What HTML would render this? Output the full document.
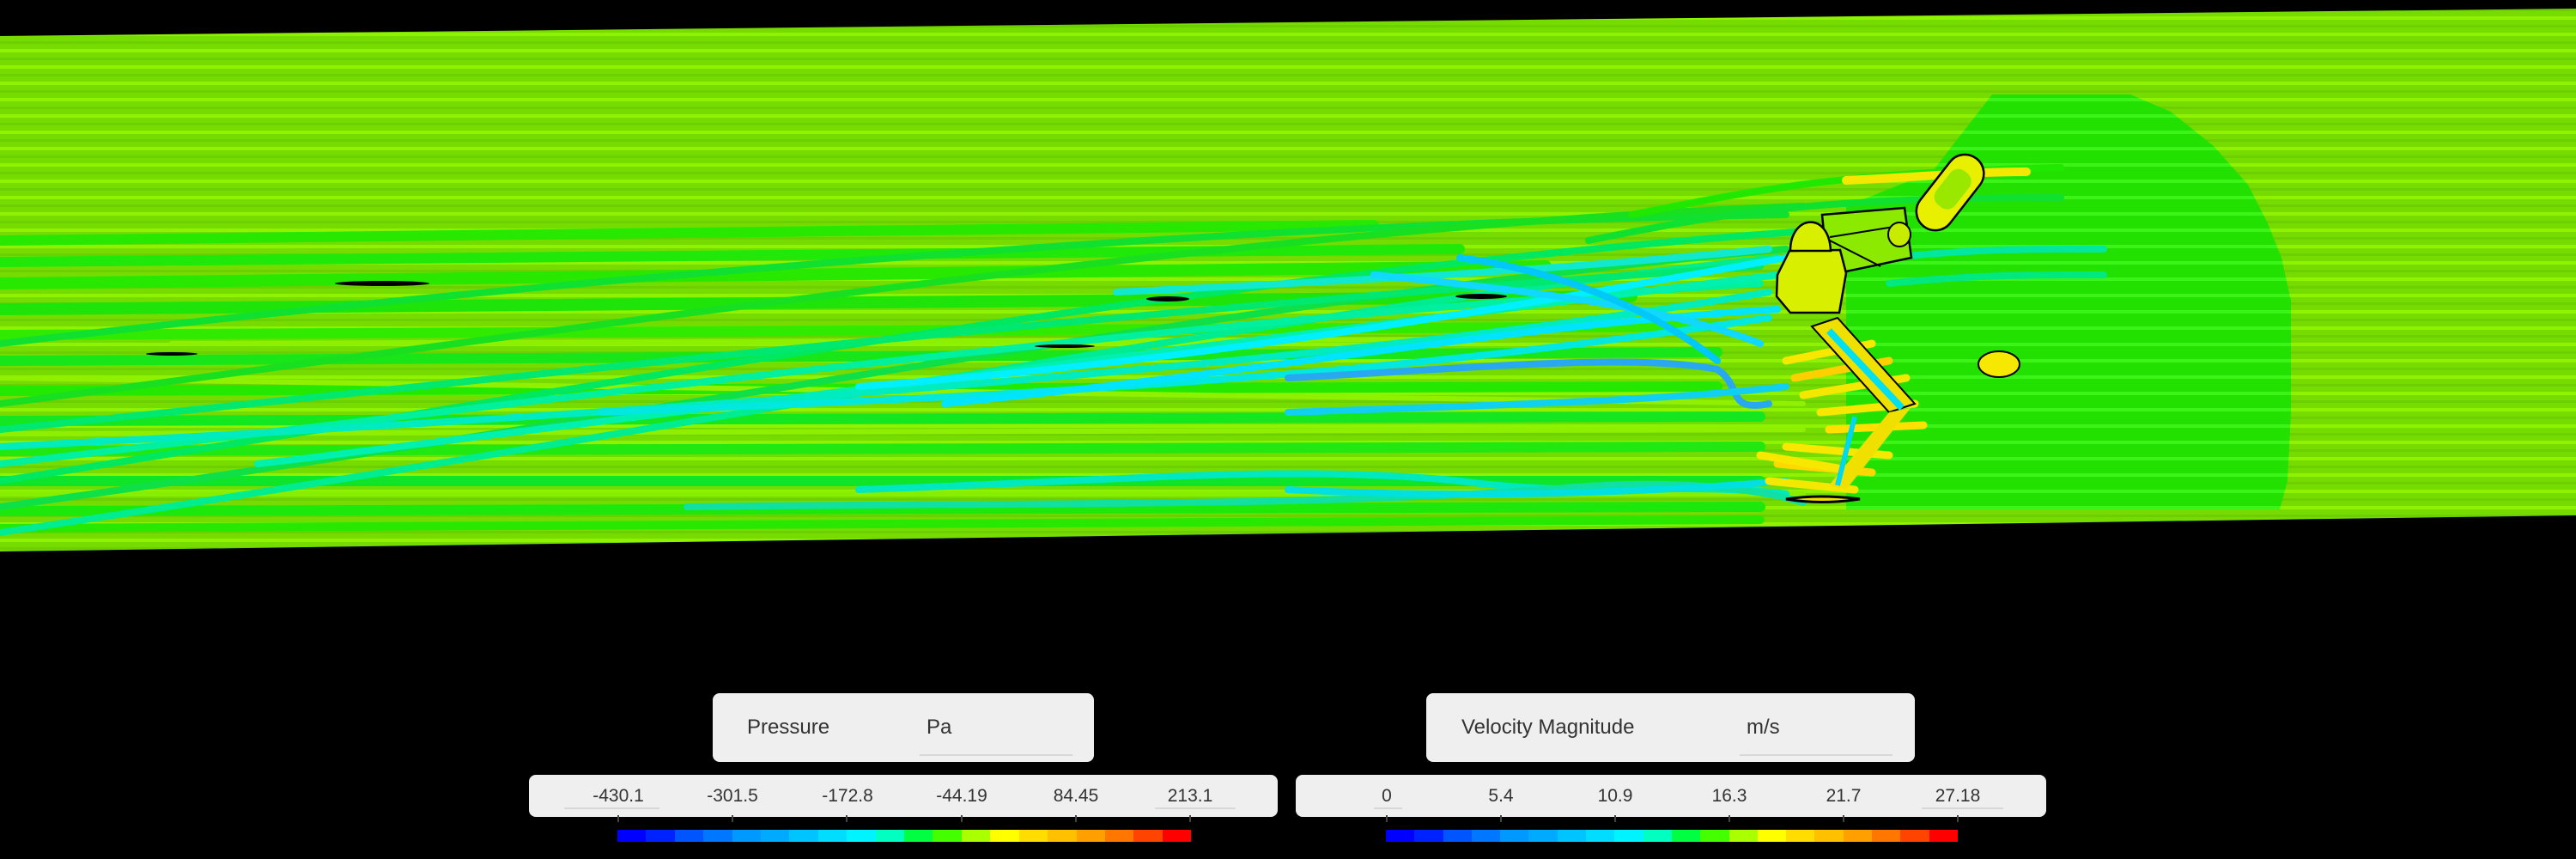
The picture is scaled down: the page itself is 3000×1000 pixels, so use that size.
<!DOCTYPE html>
<html><head><meta charset="utf-8"><style>
html,body{margin:0;padding:0;background:#000;width:3000px;height:1000px;overflow:hidden;font-family:"Liberation Sans",sans-serif;}
.box{position:absolute;background:#efefef;border-radius:8px;color:#333;}
.t{position:absolute;font-size:24px;top:26px;}
.ul{position:absolute;height:2px;background:#d8d8d8;}
.v{position:absolute;font-size:21px;top:13px;transform:translateX(-50%);white-space:nowrap;}
.tick{position:absolute;width:2px;height:8px;background:#444;top:949px;}
.bar{position:absolute;top:966px;height:14px;display:flex;}
.bar div{flex:1;}
</style></head><body>
<svg width="3000" height="1000" style="position:absolute;left:0;top:0">
<defs>
<clipPath id="c"><polygon points="0,42 3000,10 3000,600 0,642"/></clipPath>
<pattern id="p" width="40" height="19" patternUnits="userSpaceOnUse">
<rect width="40" height="19" fill="#76dc00"/><rect y="0" width="40" height="4" fill="#8ef200"/><rect y="10" width="40" height="3" fill="#6cd000"/>
</pattern>
<pattern id="w" width="40" height="19" patternUnits="userSpaceOnUse">
<rect width="40" height="19" fill="#22e000"/><rect y="0" width="40" height="4" fill="#3cf418"/>
</pattern>
</defs>
<g clip-path="url(#c)">
<rect width="3000" height="700" fill="url(#p)"/>
<path d="M2320,110 L2481,110 L2528,130 L2578,170 L2618,215 L2641,260 L2657,300 L2668,350 L2668,480 L2664,560 L2655,593 L2150,593 L2150,240 L2250,200 Z" fill="url(#w)"/>
<g fill="none" stroke-width="8" stroke-linecap="round">
<path d="M0,280 L1600,262" stroke="#28e800" stroke-width="12"/>
<path d="M0,305 L1700,290" stroke="#20e808" stroke-width="12"/>
<path d="M0,330 L1800,310" stroke="#28e800" stroke-width="14"/>
<path d="M0,360 L1900,345" stroke="#1ee40a" stroke-width="14"/>
<path d="M0,390 L2000,380" stroke="#30ea00" stroke-width="12"/>
<path d="M0,420 L2000,410" stroke="#18e618" stroke-width="12"/>
<path d="M0,455 L2000,450" stroke="#24e800" stroke-width="12"/>
<path d="M0,490 L2050,485" stroke="#14e620" stroke-width="12"/>
<path d="M0,525 L2050,520" stroke="#20e810" stroke-width="12"/>
<path d="M0,560 L2050,560" stroke="#10e428" stroke-width="12"/>
<path d="M0,595 L2050,590" stroke="#1ce80c" stroke-width="12"/>
<path d="M0,615 L2050,605" stroke="#28e800" stroke-width="10"/>
<path d="M0,440 L2100,470" stroke="#90f000" stroke-width="6"/>
<path d="M0,505 L2100,500" stroke="#8ef000" stroke-width="6"/>
<path d="M0,575 L2100,575" stroke="#88ee00" stroke-width="6"/>
<path d="M200,400 L1700,395" stroke="#8cf000" stroke-width="6"/>
<path d="M0,400 C600,330 1400,260 2080,250" stroke="#10e030"/>
<path d="M0,470 C700,380 1500,260 2100,240" stroke="#18e020"/>
<path d="M0,560 C700,450 1400,320 2090,270" stroke="#00e860"/>
<path d="M0,620 C800,500 1500,360 2070,300" stroke="#00ec90"/>
<path d="M0,590 C800,480 1500,340 2080,290" stroke="#10e048"/>
<path d="M0,540 C600,470 1400,370 2050,330" stroke="#00f0a0"/>
<path d="M0,500 C500,450 1300,360 2050,310" stroke="#00e870"/>
<path d="M300,540 C900,470 1500,390 2070,320" stroke="#00f0b0"/>
<path d="M0,520 C800,480 1600,420 2060,340" stroke="#00ecc0"/>
<path d="M700,480 C1200,460 1600,440 2060,370" stroke="#00e8e0"/>
<path d="M1000,450 C1400,420 1750,360 2080,300" stroke="#00f0ff"/>
<path d="M1100,470 C1500,430 1750,380 2070,360" stroke="#00e4ff"/>
<path d="M1300,340 C1500,330 1750,320 2060,290" stroke="#10e8d0"/>
<path d="M1600,320 C1800,340 1950,360 2050,400" stroke="#10d8ff"/>
<path d="M1700,300 C1850,320 1950,380 2000,420" stroke="#00c8f8"/>
<path d="M1500,440 C1700,430 1900,410 2000,430 C2030,450 2010,480 2060,470" stroke="#28a8f0"/>
<path d="M1500,480 C1800,470 1950,465 2080,450" stroke="#10d0f0"/>
<path d="M1000,570 C1300,560 1500,540 1700,560 C1850,580 1950,560 2080,575" stroke="#00e8c0"/>
<path d="M800,590 C1200,585 1500,590 1800,570 C1950,555 2050,570 2100,585" stroke="#10e0a0"/>
<path d="M1500,570 C1700,580 1900,575 2080,560" stroke="#00e0e0"/>
<path d="M1900,250 C2050,220 2150,200 2400,195" stroke="#20e800"/>
<path d="M1850,280 C2000,250 2100,230 2400,230" stroke="#10e030"/>
<path d="M2200,300 C2300,290 2350,290 2450,290" stroke="#00e8a0"/>
<path d="M2200,330 C2300,320 2350,320 2450,320" stroke="#00e880"/>
<path d="M2150,210 C2250,205 2300,200 2360,200" stroke="#f4e800" stroke-width="10"/>
</g>
<g stroke-width="9" stroke-linecap="round" fill="none">
<path d="M2080,420 L2180,400" stroke="#f8e800"/>
<path d="M2090,440 L2200,420" stroke="#ffd000"/>
<path d="M2100,460 L2220,440" stroke="#f4e800"/>
<path d="M2120,480 L2230,470" stroke="#f8e800"/>
<path d="M2130,500 L2240,495" stroke="#ffe000"/>
<path d="M2080,520 L2200,530" stroke="#f8e800"/>
<path d="M2070,540 L2180,550" stroke="#ffd800"/>
<path d="M2060,560 L2160,570" stroke="#f4e800"/>
<path d="M2050,530 L2140,545" stroke="#f8e800"/>
</g>
<path d="M2110,380 L2140,370 L2230,470 L2200,480 Z" fill="#f0e000" stroke="#000" stroke-width="2"/>
<path d="M2130,385 L2215,475" stroke="#00e0f0" stroke-width="8"/>
<path d="M2200,480 L2225,475 L2150,570 L2130,565 Z" fill="#f0e000"/>
<path d="M2160,485 L2140,565" stroke="#00d8f0" stroke-width="6"/>
<path d="M2080,581 Q2120,575 2166,581 Q2120,588 2080,581Z" fill="#f0e000" stroke="#000" stroke-width="3"/>
<path d="M2122,250 L2218,242 L2226,300 L2150,316 L2128,310 Z" fill="#8cea00" stroke="#000" stroke-width="2.5"/>
<path d="M2131,276 L2218,262 M2131,280 L2190,310" stroke="#000" stroke-width="2"/>
<path d="M2084,292 L2143,291 L2150,318 L2142,364 L2085,364 L2069,345 L2070,320 Z" fill="#d8f000" stroke="#000" stroke-width="2.5"/>
<path d="M2085,292 C2085,250 2130,245 2132,292 Z" fill="#d8f000" stroke="#000" stroke-width="2.5"/>
<ellipse cx="2212" cy="273" rx="13" ry="14" fill="#c8ec00" stroke="#000" stroke-width="2"/>
<g transform="translate(2268,228) rotate(38)">
<rect x="-22" y="-55" width="44" height="100" rx="22" fill="#e8f000" stroke="#000" stroke-width="2.5"/>
<rect x="-14" y="-35" width="28" height="50" rx="12" fill="#9ae800"/>
</g>
<ellipse cx="2328" cy="424" rx="24" ry="15" fill="#f6e800" stroke="#000" stroke-width="2"/>
<g fill="#000">
<ellipse cx="445" cy="330" rx="55" ry="3"/><ellipse cx="1360" cy="348" rx="25" ry="3"/><ellipse cx="1725" cy="345" rx="30" ry="3"/>
<ellipse cx="1240" cy="403" rx="35" ry="2"/><ellipse cx="200" cy="412" rx="30" ry="2"/>
</g>
</g>
</svg>

<div class="box" style="left:830px;top:807px;width:444px;height:80px">
<span class="t" style="left:40px">Pressure</span><span class="t" style="left:249px">Pa</span>
<div class="ul" style="left:241px;width:178px;top:71px"></div></div>
<div class="box" style="left:616px;top:902px;width:872px;height:49px">
<span class="v" style="left:104px">-430.1</span><span class="v" style="left:237px">-301.5</span><span class="v" style="left:371px">-172.8</span><span class="v" style="left:504px">-44.19</span><span class="v" style="left:637px">84.45</span><span class="v" style="left:770px">213.1</span>
<div class="ul" style="left:41px;width:111px;top:38px"></div><div class="ul" style="left:729px;width:94px;top:38px"></div></div>
<div class="tick" style="left:719px"></div><div class="tick" style="left:852px"></div><div class="tick" style="left:985px"></div><div class="tick" style="left:1119px"></div><div class="tick" style="left:1252px"></div><div class="tick" style="left:1385px"></div>

<div class="box" style="left:1661px;top:807px;width:569px;height:80px">
<span class="t" style="left:41px">Velocity Magnitude</span><span class="t" style="left:373px">m/s</span>
<div class="ul" style="left:365px;width:178px;top:71px"></div></div>
<div class="box" style="left:1509px;top:902px;width:874px;height:49px">
<span class="v" style="left:106px">0</span><span class="v" style="left:239px">5.4</span><span class="v" style="left:372px">10.9</span><span class="v" style="left:505px">16.3</span><span class="v" style="left:638px">21.7</span><span class="v" style="left:771px">27.18</span>
<div class="ul" style="left:91px;width:33px;top:38px"></div><div class="ul" style="left:729px;width:95px;top:38px"></div></div>
<div class="tick" style="left:1614px"></div><div class="tick" style="left:1747px"></div><div class="tick" style="left:1880px"></div><div class="tick" style="left:2013px"></div><div class="tick" style="left:2146px"></div><div class="tick" style="left:2279px"></div>

<div class="bar" style="left:719px;width:668px">
<div style="background:#0000ff"></div><div style="background:#0022ff"></div><div style="background:#0055ff"></div><div style="background:#0077ff"></div><div style="background:#0099ff"></div><div style="background:#00aaff"></div><div style="background:#00c4ff"></div><div style="background:#00ddff"></div><div style="background:#00f4ff"></div><div style="background:#00ffc0"></div><div style="background:#00ff40"></div><div style="background:#44ff00"></div><div style="background:#aaff00"></div><div style="background:#ffff00"></div><div style="background:#ffdd00"></div><div style="background:#ffc000"></div><div style="background:#ff9f00"></div><div style="background:#ff7700"></div><div style="background:#ff4400"></div><div style="background:#ff0000"></div>
</div>
<div class="bar" style="left:1614px;width:666px">
<div style="background:#0000ff"></div><div style="background:#0022ff"></div><div style="background:#0055ff"></div><div style="background:#0077ff"></div><div style="background:#0099ff"></div><div style="background:#00aaff"></div><div style="background:#00c4ff"></div><div style="background:#00ddff"></div><div style="background:#00f4ff"></div><div style="background:#00ffc0"></div><div style="background:#00ff40"></div><div style="background:#44ff00"></div><div style="background:#aaff00"></div><div style="background:#ffff00"></div><div style="background:#ffdd00"></div><div style="background:#ffc000"></div><div style="background:#ff9f00"></div><div style="background:#ff7700"></div><div style="background:#ff4400"></div><div style="background:#ff0000"></div>
</div>
</body></html>
